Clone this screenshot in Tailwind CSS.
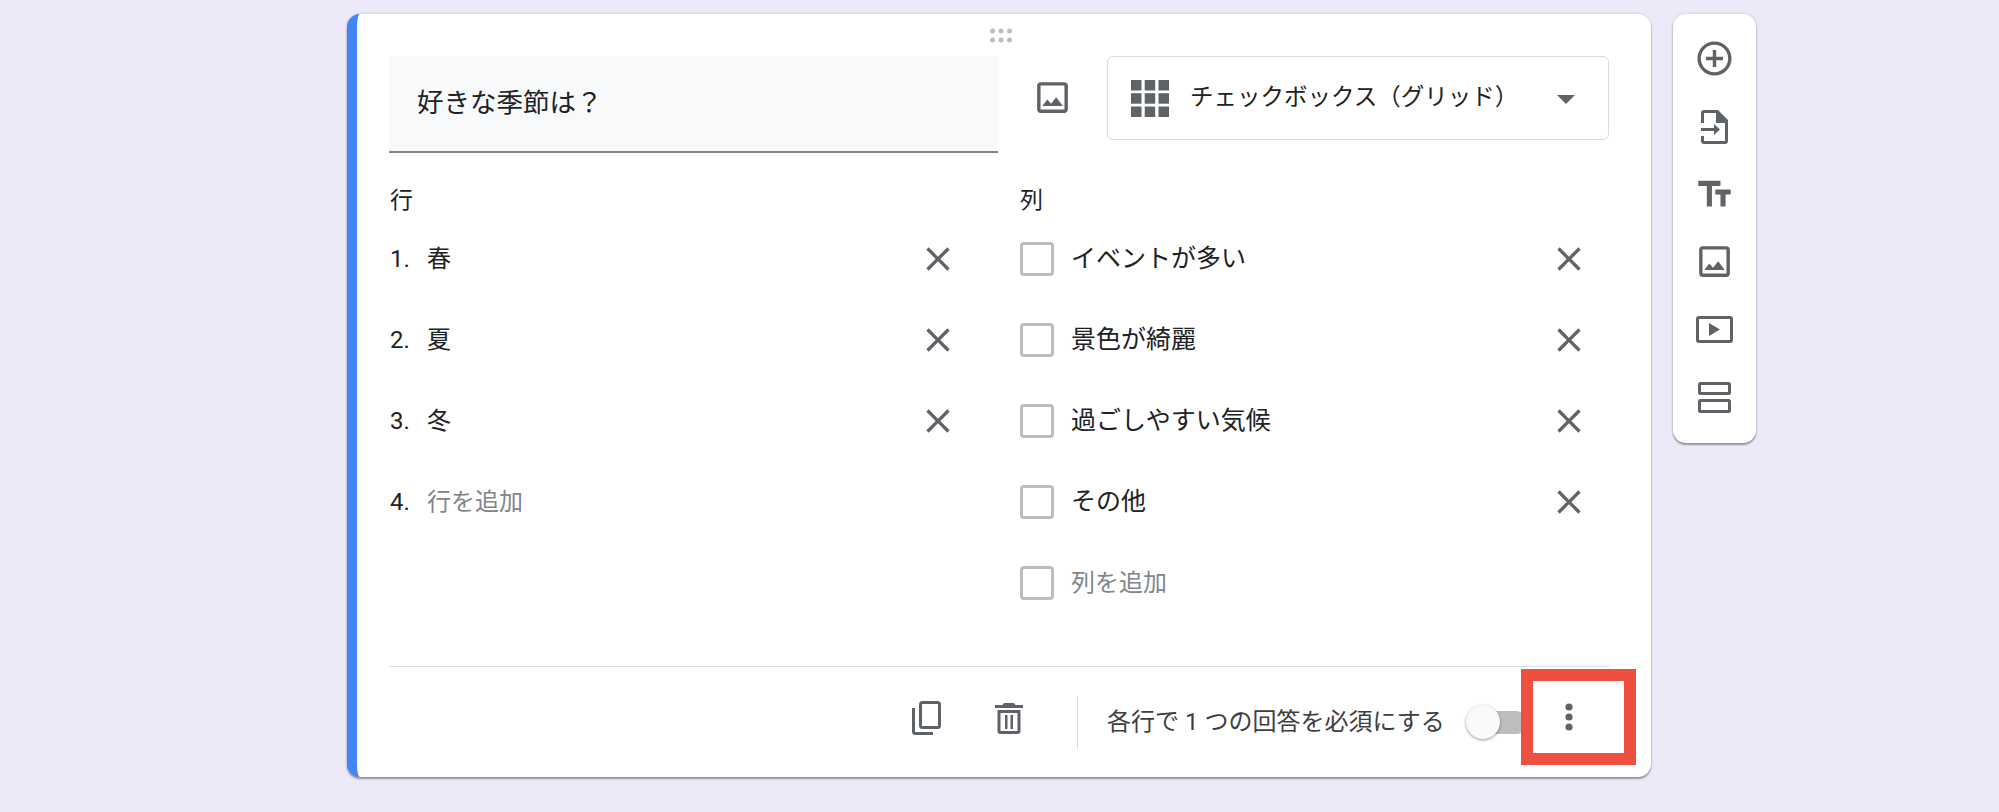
<!DOCTYPE html>
<html lang="ja">
<head>
  <meta charset="UTF-8" />
  <meta name="viewport" content="width=device-width, initial-scale=1.0"/>
  <title>好きな季節は？</title>
  <script src="https://cdn.jsdelivr.net/npm/@tailwindcss/browser@4"></script>
</head>
<body class="h-screen overflow-hidden bg-[#ede9f8] font-['Roboto','Noto_Sans_CJK_JP',sans-serif] text-[#202124] flex items-start pl-[347px] pt-[14px]">

  <!-- Question card -->
  <div class="relative flex flex-col w-[1304px] h-[763px] bg-white rounded-[13px] border-l-[10px] border-[#4285f4] shadow-[0_2px_2px_0_rgba(0,0,0,.35),0_0_3px_0_rgba(0,0,0,.15)]">
    <svg class="absolute left-[633px] top-[14px]" width="22" height="15" viewBox="0 0 22 15" fill="#bdbdbd"><circle cx="2.5" cy="3" r="2.5"/><circle cx="11" cy="3" r="2.5"/><circle cx="19.5" cy="3" r="2.5"/><circle cx="2.5" cy="12" r="2.5"/><circle cx="11" cy="12" r="2.5"/><circle cx="19.5" cy="12" r="2.5"/></svg>

    <!-- Title row -->
    <div class="flex items-start pl-[32px] pt-[42px]">
      <div class="flex items-center w-[609px] h-[97px] pl-[28px] pb-[2px] bg-[#f8f9fa] border-b-2 border-[#80868b] text-[26.5px]">好きな季節は？</div>
      <svg class="mt-[21px] ml-[34px] mr-[34px] shrink-0" width="41" height="41" viewBox="0 0 24 24" fill="#5f6368"><path d="M19 5v14H5V5h14m0-2H5c-1.1 0-2 .9-2 2v14c0 1.1.9 2 2 2h14c1.1 0 2-.9 2-2V5c0-1.1-.9-2-2-2zm-4.86 8.86l-3 3.87L9 13.14 6 17h12l-3.86-5.14z"/></svg>
      <div class="flex items-center w-[502px] h-[84px] pl-[23px] border border-[#dadce0] rounded-[6px]">
        <svg width="38" height="37" viewBox="0 0 38 37" fill="#5f6368"><rect width="10.5" height="10.5"/><rect x="13.7" width="10.5" height="10.5"/><rect x="27.5" width="10.5" height="10.5"/><rect y="13.2" width="10.5" height="10.5"/><rect x="13.7" y="13.2" width="10.5" height="10.5"/><rect x="27.5" y="13.2" width="10.5" height="10.5"/><rect y="26.5" width="10.5" height="10.5"/><rect x="13.7" y="26.5" width="10.5" height="10.5"/><rect x="27.5" y="26.5" width="10.5" height="10.5"/></svg>
        <span class="ml-[21px] w-[367px] text-[23.5px] whitespace-nowrap">チェックボックス（グリッド）</span>
        <svg class="mt-[2px]" width="18" height="9" viewBox="0 0 18 9" fill="#5f6368"><path d="M0 0h18L9 9z"/></svg>
      </div>
    </div>

    <!-- Rows and columns -->
    <div class="flex pl-[33px] text-[24px] leading-[24px]">
      <div class="w-[630px]">
        <div class="h-[65px] pt-[36px] text-[23px]">行</div>
        <div class="flex items-center w-[568px] h-[81px]">
          <span class="w-[37px]">1.</span><span class="flex-1">春</span>
          <svg width="40" height="40" viewBox="0 0 24 24" fill="#5f6368"><path d="M19 6.41L17.59 5 12 10.59 6.41 5 5 6.41 10.59 12 5 17.59 6.41 19 12 13.41 17.59 19 19 17.59 13.41 12z"/></svg>
        </div>
        <div class="flex items-center w-[568px] h-[81px]">
          <span class="w-[37px]">2.</span><span class="flex-1">夏</span>
          <svg width="40" height="40" viewBox="0 0 24 24" fill="#5f6368"><path d="M19 6.41L17.59 5 12 10.59 6.41 5 5 6.41 10.59 12 5 17.59 6.41 19 12 13.41 17.59 19 19 17.59 13.41 12z"/></svg>
        </div>
        <div class="flex items-center w-[568px] h-[81px]">
          <span class="w-[37px]">3.</span><span class="flex-1">冬</span>
          <svg width="40" height="40" viewBox="0 0 24 24" fill="#5f6368"><path d="M19 6.41L17.59 5 12 10.59 6.41 5 5 6.41 10.59 12 5 17.59 6.41 19 12 13.41 17.59 19 19 17.59 13.41 12z"/></svg>
        </div>
        <div class="flex items-center w-[568px] h-[81px]">
          <span class="w-[37px]">4.</span><span class="flex-1 text-[#80868b]">行を追加</span>
        </div>
      </div>
      <div class="w-[569px]">
        <div class="h-[65px] pt-[36px] text-[23px]">列</div>
        <div class="flex items-center h-[81px]">
          <span class="w-[34px] h-[34px] mr-[17px] border-[3px] border-[#bdbdbd] rounded-[4px]"></span><span class="flex-1 text-[25px]">イベントが多い</span>
          <svg width="40" height="40" viewBox="0 0 24 24" fill="#5f6368"><path d="M19 6.41L17.59 5 12 10.59 6.41 5 5 6.41 10.59 12 5 17.59 6.41 19 12 13.41 17.59 19 19 17.59 13.41 12z"/></svg>
        </div>
        <div class="flex items-center h-[81px]">
          <span class="w-[34px] h-[34px] mr-[17px] border-[3px] border-[#bdbdbd] rounded-[4px]"></span><span class="flex-1 text-[25px]">景色が綺麗</span>
          <svg width="40" height="40" viewBox="0 0 24 24" fill="#5f6368"><path d="M19 6.41L17.59 5 12 10.59 6.41 5 5 6.41 10.59 12 5 17.59 6.41 19 12 13.41 17.59 19 19 17.59 13.41 12z"/></svg>
        </div>
        <div class="flex items-center h-[81px]">
          <span class="w-[34px] h-[34px] mr-[17px] border-[3px] border-[#bdbdbd] rounded-[4px]"></span><span class="flex-1 text-[25px]">過ごしやすい気候</span>
          <svg width="40" height="40" viewBox="0 0 24 24" fill="#5f6368"><path d="M19 6.41L17.59 5 12 10.59 6.41 5 5 6.41 10.59 12 5 17.59 6.41 19 12 13.41 17.59 19 19 17.59 13.41 12z"/></svg>
        </div>
        <div class="flex items-center h-[81px]">
          <span class="w-[34px] h-[34px] mr-[17px] border-[3px] border-[#bdbdbd] rounded-[4px]"></span><span class="flex-1 text-[25px]">その他</span>
          <svg width="40" height="40" viewBox="0 0 24 24" fill="#5f6368"><path d="M19 6.41L17.59 5 12 10.59 6.41 5 5 6.41 10.59 12 5 17.59 6.41 19 12 13.41 17.59 19 19 17.59 13.41 12z"/></svg>
        </div>
        <div class="flex items-center h-[81px]">
          <span class="w-[34px] h-[34px] mr-[17px] border-[3px] border-[#bdbdbd] rounded-[4px]"></span><span class="flex-1 text-[#80868b]">列を追加</span>
        </div>
      </div>
    </div>

    <!-- Footer -->
    <div class="mt-auto ml-[32px] mr-[42px] h-[111px] flex items-center pl-[523px] border-t border-[#dadce0] text-[#3c4043]">
      <svg class="mb-[8px]" width="29" height="34" viewBox="0 0 29 34" fill="none" stroke="#5f6368" stroke-width="3"><rect x="8.5" y="1.5" width="19" height="25" rx="2"/><path d="M1.5 7v23.5a2 2 0 0 0 2 2H21"/></svg>
      <svg class="ml-[54px] mb-[8px]" width="28" height="31" viewBox="0 0 28 31" fill="#5f6368"><path d="M9 0h10l1.500 2H28v3H0V2h7.500zM2.500 7h23v21a3 3 0 0 1-3 3h-17a3 3 0 0 1-3-3zm3 3v18h17V10zM10 12h2.500v14H10zm5.500 0H18v14h-2.500z" fill-rule="evenodd"/></svg>
      <div class="ml-[54px] w-px h-[53px] bg-[#dadce0]"></div>
      <span class="ml-[29px] w-[360px] text-[24px] whitespace-nowrap">各行で 1 つの回答を必須にする</span>
      <div class="relative w-[60px] h-[23px] rounded-full bg-[#bdbdbd]">
        <div class="absolute -left-[1px] -top-[6px] w-[34px] h-[34px] rounded-full bg-[#fafafa] shadow-[0_1px_3px_rgba(0,0,0,.4)]"></div>
      </div>
    </div>

    <!-- Red highlight around the more menu -->
    <div class="absolute left-[1164px] top-[655px] flex items-center justify-center w-[115px] h-[96px] pr-[20px] bg-white border-[12px] border-[#ee5040]">
      <svg width="8" height="28" viewBox="0 0 8 28" fill="#5f6368"><circle cx="4" cy="4" r="3.600"/><circle cx="4" cy="14" r="3.600"/><circle cx="4" cy="24" r="3.600"/></svg>
    </div>
  </div>

  <!-- Side toolbar -->
  <div class="ml-[22px] w-[83px] h-[429px] pt-[11px] flex flex-col items-center bg-white rounded-[13px] shadow-[0_2px_2px_0_rgba(0,0,0,.35),0_0_3px_0_rgba(0,0,0,.15)]">
    <div class="flex items-center justify-center h-[67.7px]">
      <svg width="41" height="41" viewBox="0 0 24 24" fill="#5f6368"><path d="M13 7h-2v4H7v2h4v4h2v-4h4v-2h-4V7zm-1-5C6.480 2 2 6.480 2 12s4.480 10 10 10 10-4.480 10-10S17.520 2 12 2zm0 18c-4.410 0-8-3.590-8-8s3.590-8 8-8 8 3.590 8 8-3.590 8-8 8z"/></svg>
    </div>
    <div class="flex items-center justify-center h-[67.7px]">
      <svg width="27" height="34" viewBox="0 0 27 34" fill="#5f6368"><path d="M3 0h14l10 10v21a3 3 0 0 1-3 3H3a3 3 0 0 1-3-3v-5h3v5h21V13h-9V3H3v10H0V3a3 3 0 0 1 3-3z"/><path d="M0 18h13v-4l6 5.500-6 5.500v-4H0z"/></svg>
    </div>
    <div class="flex items-center justify-center h-[67.7px]">
      <svg width="41" height="41" viewBox="0 0 24 24" fill="#5f6368"><path d="M2.500 4v3h5v12h3V7h5V4h-13zm19 5h-9v3h3v7h3v-7h3V9z"/></svg>
    </div>
    <div class="flex items-center justify-center h-[67.7px]">
      <svg width="41" height="41" viewBox="0 0 24 24" fill="#5f6368"><path d="M19 5v14H5V5h14m0-2H5c-1.100 0-2 .9-2 2v14c0 1.100.9 2 2 2h14c1.100 0 2-.9 2-2V5c0-1.100-.9-2-2-2zm-4.860 8.860l-3 3.870L9 13.140 6 17h12l-3.860-5.140z"/></svg>
    </div>
    <div class="flex items-center justify-center h-[67.7px]">
      <svg width="37" height="27" viewBox="0 0 37 27" fill="none" stroke="#5f6368" stroke-width="3"><rect x="1.500" y="1.500" width="34" height="24" rx="1.500"/><path d="M13 7v13l11-6.500z" fill="#5f6368" stroke="none"/></svg>
    </div>
    <div class="flex items-center justify-center h-[67.7px]">
      <svg width="33" height="31" viewBox="0 0 33 31" fill="none" stroke="#5f6368" stroke-width="3"><rect x="1.500" y="1.500" width="30" height="10" rx="1"/><rect x="1.500" y="18.500" width="30" height="11" rx="1"/></svg>
    </div>
  </div>
</body>
</html>
